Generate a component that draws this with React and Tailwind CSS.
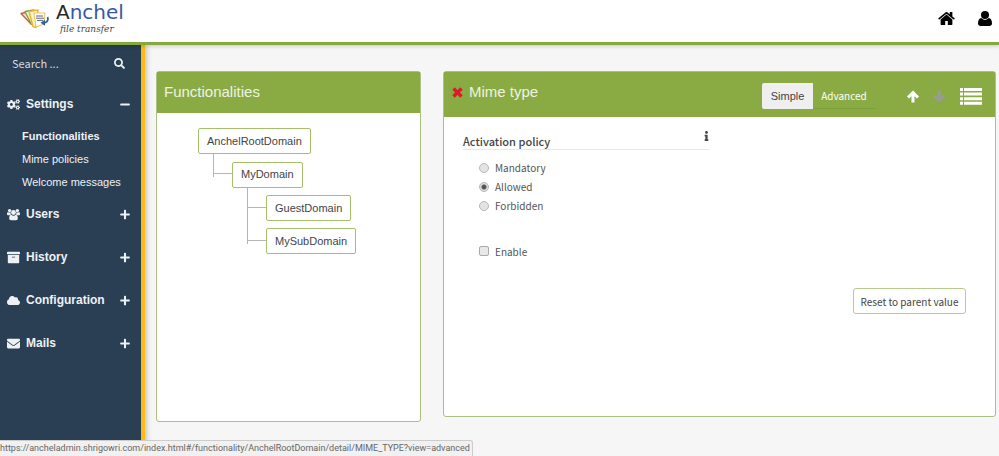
import React from "react";
import { FaArchive, FaCloud, FaCogs, FaEnvelope, FaInfo, FaMinus, FaPlus, FaSearch } from "react-icons/fa";

const sourceFont = "font-['Noto_Sans_CJK_SC','Noto_Sans',sans-serif]";

function Logo() {
  return (
    <a href="#home" className="flex items-start gap-[6px]" aria-label="Anchel file transfer">
      <svg viewBox="0 0 30 20" className="mt-[5px] h-5 w-[30px]" aria-hidden="true">
        <path d="M1 4.5 L8 3 L11 15 Z" fill="#f3dccb" stroke="#c0673f" strokeWidth="1.4" strokeLinejoin="round" />
        <path d="M5 2.5 L14 0.8 L15 17 L11.5 15.5 Z" fill="#f2f5dc" stroke="#7f9d3c" strokeWidth="1.3" strokeLinejoin="round" />
        <path d="M9 2.5 L18 1 L16 18.5 L13 17.5 Z" fill="#fbf2c9" stroke="#e8b62e" strokeWidth="1.5" strokeLinejoin="round" />
        <path d="M14 4 L25 4 L24 15 L16 18 Z" fill="#fff" stroke="#e6c763" strokeWidth="1.1" strokeLinejoin="round" />
        <path d="M16 7h7M16 9.2h8M17 11.4h6" stroke="#5d6470" strokeWidth="1" />
        <path d="M27.5 8c1.4 3-.5 5.500-3.500 5.800" fill="none" stroke="#315cab" strokeWidth="1.8" />
        <path d="M25 10.800v6l-4.500-3z" fill="#315cab" />
      </svg>
      <span className="flex flex-col items-start gap-1">
        <span className="font-['DejaVu_Sans','Verdana',sans-serif] text-[20px] leading-4 text-[#3a57a2]">
          <span className="text-[#292929]">A</span>nchel
        </span>
        <span className="pl-1 font-['DejaVu_Serif','Liberation_Serif',serif] text-[9px] leading-[10px] text-[#444] italic">file transfer</span>
      </span>
    </a>
  );
}

function HomeIcon() {
  return (
    <svg viewBox="0 200 1664 1400" className="h-[15px] w-[17px]" fill="currentColor" aria-hidden="true">
      <path d="M1408 992v480q0 26-19 45t-45 19H960v-384H704v384H320q-26 0-45-19t-19-45V992q0-1 .5-3t.5-3l575-474 575 474q1 2 1 6zm223-69l-62 74q-8 9-21 11h-3q-13 0-21-7L832 424l-692 577q-12 8-24 7-13-2-21-11l-62-74q-8-10-7-23.5T37 878l719-599q32-26 76-26t76 26l244 204V288q0-14 9-23t23-9h192q14 0 23 9t9 23v408l219 182q10 8 11 21.5t-7 23.5z" />
    </svg>
  );
}

function UserIcon() {
  return (
    <svg viewBox="0 0 14 15" className="h-[15px] w-[14px]" fill="currentColor" aria-hidden="true">
      <circle cx="7" cy="4" r="4" />
      <path d="M3.300 6.900C1 7.200 0 9.500 0 12.200 0 14 1.100 15 2.700 15h8.600c1.600 0 2.700-1 2.700-2.800 0-2.700-1-5-3.300-5.300C9.700 8 8.400 8.700 7 8.700S4.300 8 3.300 6.900z" />
    </svg>
  );
}

function UsersIcon({ className }) {
  return (
    <svg viewBox="0 0 15 13" className={className} fill="currentColor" aria-hidden="true">
      <circle cx="3" cy="2" r="1.900" />
      <circle cx="12" cy="2" r="1.900" />
      <circle cx="7.500" cy="4.200" r="2.800" />
      <path d="M1.200 3.700C.3 4 0 5 0 6.200 0 7 .6 7.400 1.400 7.400h1.700c.4-.5 1-.8 1.600-.9-.4-.8-.6-1.600-.5-2.600-1 .7-2.200.5-3-.2zM13.800 3.700c.9.300 1.200 1.300 1.200 2.500 0 .8-.6 1.200-1.400 1.200h-1.700c-.4-.5-1-.8-1.600-.9.400-.8.600-1.600.5-2.600 1 .7 2.200.5 3-.2z" />
      <path d="M5 6.700c-1.700.2-2.500 1.900-2.500 4 0 1.400.8 2.300 2.100 2.300h5.800c1.300 0 2.100-.9 2.100-2.300 0-2.100-.8-3.800-2.500-4-.7.700-1.500 1.100-2.500 1.100S5.700 7.400 5 6.700z" />
    </svg>
  );
}

function CrossIcon() {
  return (
    <svg viewBox="0 0 11 11" className="mb-1 h-[11px] w-[11px] text-[#e8142c]" aria-hidden="true">
      <path d="M1.500 1.500l8 8M9.500 1.500l-8 8" stroke="currentColor" strokeWidth="3.400" />
    </svg>
  );
}

function ArrowIcon({ down }) {
  return (
    <svg viewBox="0 0 14 13" className={down ? "h-[13px] w-[14px] rotate-180" : "h-[13px] w-[14px]"} aria-hidden="true">
      <path d="M2 7.500 L7 2.500 L12 7.500 M7 3 V12.500" fill="none" stroke="currentColor" strokeWidth="3" />
    </svg>
  );
}

function ListIcon() {
  return (
    <svg viewBox="0 0 22 17" className="h-[17px] w-[22px]" fill="currentColor" aria-hidden="true">
      <path d="M0 0h3v3H0zM4 0h18v3H4zM0 4.6h3v3H0zM4 4.6h18v3H4zM0 9.2h3v3H0zM4 9.2h18v3H4zM0 13.8h3v3H0zM4 13.8h18v3H4z" />
    </svg>
  );
}

function MenuSection({ icon: Icon, label, open, children }) {
  return (
    <li>
      <button type="button" aria-expanded={Boolean(open)} className="flex h-5 w-full items-center pr-[11px] pl-[7px] text-xs font-bold">
        <Icon className="h-[13px] w-[13px]" />
        <span className="flex-1 pl-[6px] text-left">{label}</span>
        {open ? <FaMinus className="h-[11px] w-[10px]" /> : <FaPlus className="h-[11px] w-[10px]" />}
      </button>
      {children}
    </li>
  );
}

function Sidebar() {
  return (
    <aside className="w-[145px] shrink-0 border-r-4 border-[#fdbc11] bg-[#2a3f54] text-[#eef1f4] shadow-[2px_0_5px_rgba(0,0,0,0.2)]">
      <form className="flex h-9 items-center pr-4 pl-3">
        <input aria-label="Search" placeholder="Search ..." className={`${sourceFont} min-w-0 flex-1 bg-transparent text-[11px] outline-none placeholder:text-[#d5dae0]`} />
        <button type="button" aria-label="Run search"><FaSearch className="h-[11px] w-[11px]" /></button>
      </form>
      <nav className="pt-[13px]">
        <ul className="flex flex-col gap-[23px]">
          <MenuSection icon={FaCogs} label="Settings" open>
            <ul className="-mb-[13px] flex flex-col pt-[11px] pl-[22px] text-[11px] leading-[23px]">
              <li><a href="#functionalities" className="font-bold">Functionalities</a></li>
              <li><a href="#mime">Mime policies</a></li>
              <li><a href="#welcome">Welcome messages</a></li>
            </ul>
          </MenuSection>
          <MenuSection icon={UsersIcon} label="Users" />
          <MenuSection icon={FaArchive} label="History" />
          <MenuSection icon={FaCloud} label="Configuration" />
          <MenuSection icon={FaEnvelope} label="Mails" />
        </ul>
      </nav>
    </aside>
  );
}

function DomainButton({ children }) {
  return <button type="button" className="h-[26px] rounded-[2px] border border-[#a5c06c] bg-white px-2 text-[11px] whitespace-nowrap text-[#444]">{children}</button>;
}

function Branch({ last, children, nested }) {
  return (
    <li className="flex pt-[7px]">
      <span className="-mt-[7px] flex w-[19px] shrink-0 flex-col self-stretch">
        <span className="h-5 border-b border-l border-[#b5b5b5]" />
        <span className={last ? "h-[3px] border-l border-[#b5b5b5]" : "flex-1 border-l border-[#b5b5b5]"} />
      </span>
      <div><DomainButton>{children}</DomainButton>{nested}</div>
    </li>
  );
}

function FunctionalityPanel() {
  return (
    <section className="flex min-h-[351px] w-[265px] shrink-0 flex-col rounded-[3px] border border-[#a9c181] bg-white">
      <h2 className="flex h-[41px] items-center bg-[#8aab43] px-[7px] text-[15px] text-[#eef2e4]">Functionalities</h2>
      <div className="pt-[15px] pl-[41px]">
        <DomainButton>AnchelRootDomain</DomainButton>
        <ul className="pl-[15px]">
          <Branch last nested={
            <ul className="pl-[15px]">
              <Branch>GuestDomain</Branch>
              <Branch last>MySubDomain</Branch>
            </ul>
          }>MyDomain</Branch>
        </ul>
      </div>
    </section>
  );
}

function PolicyRadio({ label, checked }) {
  return (
    <label className="flex h-[19px] items-center gap-[6px]">
      <input type="radio" name="policy" defaultChecked={checked} className="h-[10px] w-[10px] appearance-none rounded-full border border-[#b8b8b8] bg-[#e3e3e3] checked:bg-[radial-gradient(circle,#555_0_2px,#dddddd_3px)]" />
      {label}
    </label>
  );
}

function MimePanel() {
  return (
    <section className="flex min-h-[346px] min-w-0 flex-1 flex-col rounded-[3px] border border-[#a9c181] bg-white">
      <header className="flex h-[45px] items-center bg-[#8aab43] pr-[13px] pl-2">
        <CrossIcon />
        <h2 className="mb-1 flex-1 pl-[6px] text-[15px] text-[#eef2e4]">Mime type</h2>
        <div className="mt-[3px] flex items-center">
          <button type="button" className="h-[26px] w-[51px] rounded-l-[2px] bg-[#efefef] text-[11px] text-[#444]">Simple</button>
          <button type="button" className={`${sourceFont} h-[25px] w-[62px] border-b border-[#7f9f3d] text-[10px] text-white`}>Advanced</button>
        </div>
        <div className="mt-[3px] ml-[31px] flex items-center">
          <button type="button" aria-label="Move up" className="text-white"><ArrowIcon /></button>
          <button type="button" aria-label="Move down" className="ml-3 text-[#999b97]"><ArrowIcon down /></button>
          <button type="button" aria-label="List" className="ml-[14px] text-white"><ListIcon /></button>
        </div>
      </header>
      <form className={`${sourceFont} flex flex-1 flex-col px-[19px] pt-[14px] text-[10px] text-[#555]`}>
        <div className="flex h-[19px] w-[246px] justify-between border-b border-[#e9e9e9]">
          <h3 className="text-[11px] leading-5 font-medium text-[#444]">Activation policy</h3>
          <FaInfo className="h-[10px] w-[5px] text-[#444]" />
        </div>
        <div className="flex flex-col items-start px-4 pt-2">
          <PolicyRadio label="Mandatory" />
          <PolicyRadio label="Allowed" checked />
          <PolicyRadio label="Forbidden" />
          <label className="mt-[26px] flex h-5 items-center gap-[6px]">
            <input type="checkbox" className="h-[10px] w-[10px] appearance-none rounded-[2px] border border-[#aaa] bg-[#e8e8e8] checked:bg-[#777]" />
            Enable
          </label>
        </div>
        <button type="button" className="mt-[27px] mr-[10px] h-[26px] w-[113px] self-end rounded-[3px] border border-[#b6cb8c] bg-white whitespace-nowrap text-[#444]">Reset to parent value</button>
      </form>
    </section>
  );
}

export default function App() {
  return (
    <div className="flex min-h-screen flex-col bg-[#f6f6f6] font-['Liberation_Sans',Arial,sans-serif]">
      <header className="z-10 flex h-[45px] items-start justify-between border-b-[3px] border-[#86a93e] bg-white pt-1 pr-[7px] pl-5 shadow-[0_1px_4px_rgba(0,0,0,0.2)]">
        <Logo />
        <nav className="flex items-center gap-[23px] pt-[7px] text-black">
          <a href="#dashboard" aria-label="Home"><HomeIcon /></a>
          <a href="#account" aria-label="Account"><UserIcon /></a>
        </nav>
      </header>
      <div className="flex flex-1">
        <Sidebar />
        <main className="flex min-w-0 flex-1 items-start gap-[22px] pt-[26px] pr-[3px] pl-[11px]">
          <FunctionalityPanel />
          <MimePanel />
        </main>
      </div>
      <div className="fixed bottom-0 left-0 z-20 h-4 overflow-hidden rounded-tr-[3px] border-t border-r border-[#ccc] bg-[#f1f1f1] pr-[2px] font-['Roboto','Noto_Sans',sans-serif] text-[9px] leading-[15px] whitespace-nowrap text-[#666]">
        https://ancheladmin.shrigowri.com/index.html#/functionality/AnchelRootDomain/detail/MIME_TYPE?view=advanced
      </div>
    </div>
  );
}
